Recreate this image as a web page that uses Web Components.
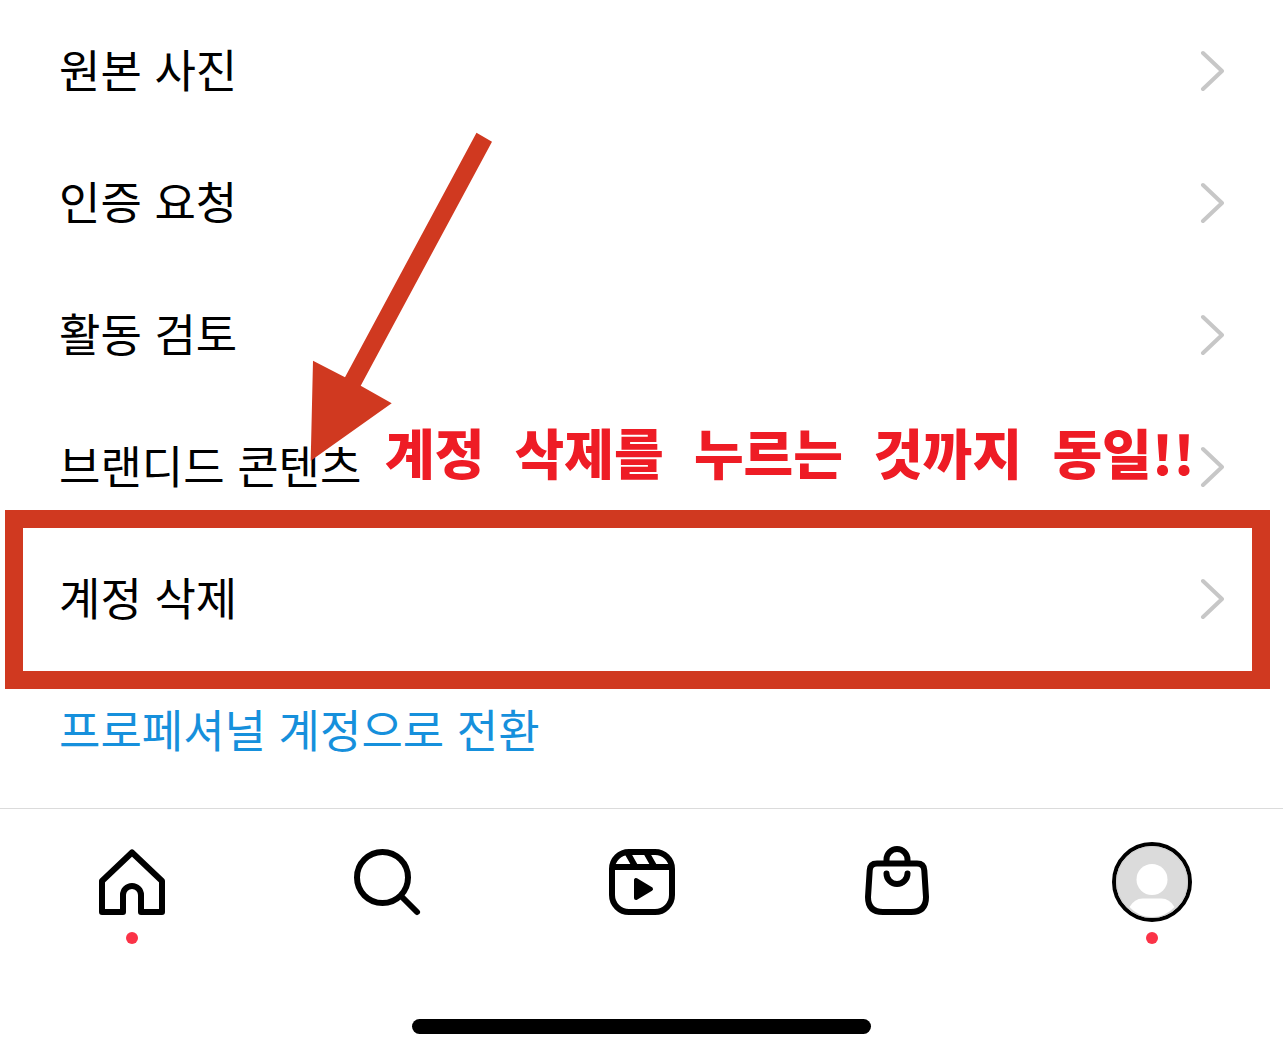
<!DOCTYPE html>
<html lang="ko">
<head>
<meta charset="utf-8">
<meta name="viewport" content="width=device-width, initial-scale=1">
<title>계정 설정</title>
<style>
  body {
    margin: 0;
    background: #fff;
    color: #000;
    font-family: "Noto Sans CJK KR", sans-serif;
  }
</style>
</head>
<body>

<settings-screen>
  <settings-row>원본 사진</settings-row>
  <settings-row>인증 요청</settings-row>
  <settings-row>활동 검토</settings-row>
  <settings-row>브랜디드 콘텐츠</settings-row>
  <settings-row marked>계정 삭제</settings-row>
  <settings-row accent>프로페셔널 계정으로 전환</settings-row>

  <guide-arrow slot="notes"></guide-arrow>
  <guide-note slot="notes">계정  삭제를  누르는  것까지  동일!!</guide-note>

  <tab-bar slot="tabs">
    <tab-item label="홈" dot>
      <svg viewBox="0 0 80 80" fill="none" stroke="#000" stroke-width="6" stroke-linejoin="round">
        <path d="M40 10.5 10 39v31h21V53a9 9 0 0 1 18 0v17h21V39z"/>
      </svg>
    </tab-item>
    <tab-item label="검색">
      <svg viewBox="0 0 80 80" fill="none" stroke="#000" stroke-width="6" stroke-linecap="round">
        <circle cx="35.5" cy="35.5" r="25.5"/>
        <path d="M54 54l16 16"/>
      </svg>
    </tab-item>
    <tab-item label="릴스">
      <svg viewBox="0 0 80 80" fill="none" stroke="#000" stroke-width="6">
        <rect x="10" y="10" width="60" height="60" rx="17"/>
        <path d="M10 25h60M25 10l8.500 15M44 10l8.500 15"/>
        <path d="M34 38v18l15-9z" fill="#000" stroke-width="4" stroke-linejoin="round"/>
      </svg>
    </tab-item>
    <tab-item label="쇼핑">
      <svg viewBox="0 0 80 80" fill="none" stroke="#000" stroke-width="6" stroke-linecap="round">
        <path d="M20 21.500h40q7 0 7.300 7L69 55q0 15-15 15H26q-15 0-15-15l1.700-26.500q.3-7 7.300-7z"/>
        <path d="M29.500 20v-2.500a10.500 10.500 0 0 1 21 0V20M29.500 31.500a10.500 10.500 0 0 0 21 0"/>
      </svg>
    </tab-item>
    <tab-item label="프로필" dot>
      <svg viewBox="0 0 80 80">
        <circle cx="40" cy="40" r="38" fill="#dbdbdb" stroke="#000" stroke-width="4"/>
        <circle cx="40" cy="40" r="35.500" fill="none" stroke="#cfcfcf"/>
        <circle cx="40" cy="37.500" r="15.500" fill="#fff"/>
        <path d="M17.500 65q5-8.500 13-8.500h19q8 0 13 8.500-9 10-22.500 10t-22.500-10z" fill="#fff"/>
      </svg>
    </tab-item>
  </tab-bar>
</settings-screen>

<script>
(function() {

function makeTemplate(html) {
  const tmpl = document.createElement('template');
  tmpl.innerHTML = html;
  return tmpl;
}

const screenTmpl = makeTemplate(`
  <style>
    :host {
      display: flex;
      flex-direction: column;
      min-height: 100vh;
    }
    main {
      position: relative;
      padding: 5px 0 11px;
    }
    .indicator {
      width: 459px;
      max-width: 90%;
      height: 15px;
      margin: auto auto 23px;
      border-radius: 8px;
      background: #000;
    }
  </style>
  <main>
    <slot></slot>
    <slot name="notes"></slot>
  </main>
  <slot name="tabs"></slot>
  <div class="indicator"></div>
`);

class SettingsScreen extends HTMLElement {
  constructor() {
    super();
    this.attachShadow({mode: 'open'}).appendChild(screenTmpl.content.cloneNode(true));
  }
}

const rowTmpl = makeTemplate(`
  <style>
    :host {
      display: block;
      position: relative;
    }
    button {
      display: flex;
      align-items: center;
      justify-content: space-between;
      width: 100%;
      min-height: 132px;
      padding: 0 59px;
      border: 0;
      background: none;
      color: inherit;
      font: inherit;
      font-size: 45px;
      line-height: 64px;
      text-align: left;
      cursor: pointer;
    }
    span {
      padding-bottom: 4px;
    }
    svg {
      flex: none;
      width: 24px;
      height: 42px;
    }
    :host([accent]) {
      color: #1690dc;
    }
    :host([accent]) svg {
      display: none;
    }
    /* thick frame that spills over the neighbouring rows */
    :host([marked])::after {
      content: "";
      position: absolute;
      inset: -23px 13px -24px 5px;
      border: 18px solid #d03920;
      pointer-events: none;
    }
  </style>
  <button type="button">
    <span><slot></slot></span>
    <svg viewBox="0 0 24 42" fill="none" stroke="#c7c7c7" stroke-width="4" stroke-linecap="round" stroke-linejoin="round" aria-hidden="true">
      <path d="M3 3l19 18L3 39"/>
    </svg>
  </button>
`);

class SettingsRow extends HTMLElement {
  constructor() {
    super();
    this.attachShadow({mode: 'open'}).appendChild(rowTmpl.content.cloneNode(true));
  }
}

const arrowTmpl = makeTemplate(`
  <style>
    :host {
      position: absolute;
      left: 310px;
      top: 132px;
      pointer-events: none;
    }
    svg {
      display: block;
      width: 183px;
      height: 330px;
    }
  </style>
  <svg viewBox="0 0 183 330" aria-hidden="true">
    <path fill="#d03920" d="M166.500.7 182 9.700 50.700 253.700 81.700 271.300.7 328.700 3 228.700 35 245.300z"/>
  </svg>
`);

class GuideArrow extends HTMLElement {
  constructor() {
    super();
    this.attachShadow({mode: 'open'}).appendChild(arrowTmpl.content.cloneNode(true));
  }
}

const noteTmpl = makeTemplate(`
  <style>
    :host {
      position: absolute;
      left: 385px;
      top: 413px;
      color: #ee1c25;
      font-size: 54px;
      font-weight: 900;
      line-height: 78px;
      pointer-events: none;
    }
    /* the words are set apart by double spaces */
    slot {
      white-space: pre;
    }
  </style>
  <slot></slot>
`);

class GuideNote extends HTMLElement {
  constructor() {
    super();
    this.attachShadow({mode: 'open'}).appendChild(noteTmpl.content.cloneNode(true));
  }
}

const barTmpl = makeTemplate(`
  <style>
    :host {
      display: block;
    }
    nav {
      display: flex;
      padding: 33px 4px 0;
      border-top: 1px solid #dbdbdb;
    }
  </style>
  <nav><slot></slot></nav>
`);

class TabBar extends HTMLElement {
  constructor() {
    super();
    this.attachShadow({mode: 'open'}).appendChild(barTmpl.content.cloneNode(true));
  }
}

const tabTmpl = makeTemplate(`
  <style>
    :host {
      display: block;
      flex: 1;
    }
    a {
      display: flex;
      flex-direction: column;
      align-items: center;
      gap: 10px;
    }
    ::slotted(svg) {
      display: block;
      width: 80px;
      height: 80px;
    }
    .dot {
      width: 12px;
      height: 12px;
      border-radius: 50%;
    }
    :host([dot]) .dot {
      background: #fb3347;
    }
  </style>
  <a href="#"><slot></slot><span class="dot"></span></a>
`);

class TabItem extends HTMLElement {
  constructor() {
    super();
    this.attachShadow({mode: 'open'}).appendChild(tabTmpl.content.cloneNode(true));
  }

  connectedCallback() {
    this.shadowRoot.querySelector('a').setAttribute('aria-label', this.getAttribute('label'));
  }
}

customElements.define('settings-screen', SettingsScreen);
customElements.define('settings-row', SettingsRow);
customElements.define('guide-arrow', GuideArrow);
customElements.define('guide-note', GuideNote);
customElements.define('tab-bar', TabBar);
customElements.define('tab-item', TabItem);
})();
</script>
</body>
</html>
